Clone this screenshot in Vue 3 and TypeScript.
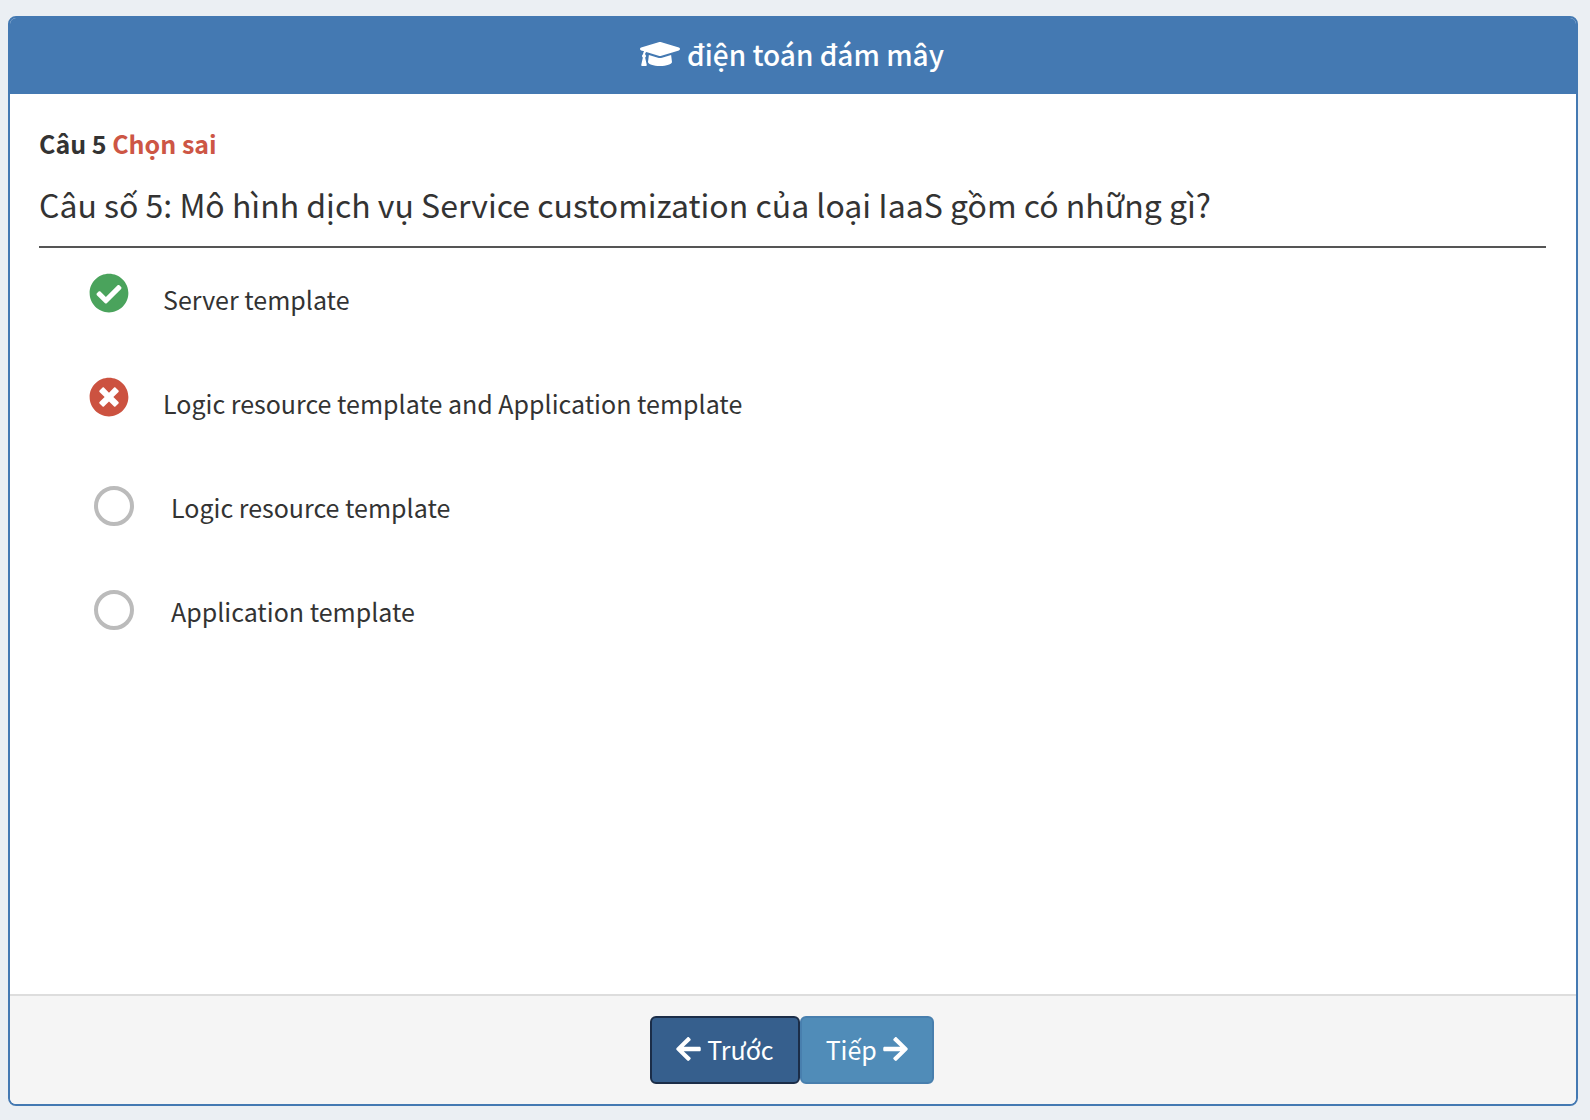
<script setup lang="ts">
import { ref } from 'vue'

type Mark = 'correct' | 'wrong' | 'none'

interface Option {
  id: number
  text: string
  mark: Mark
}

const title = 'điện toán đám mây'
const question = 'Câu số 5: Mô hình dịch vụ Service customization của loại IaaS gồm có những gì?'

const options: Option[] = [
  { id: 1, text: 'Server template', mark: 'correct' },
  { id: 2, text: 'Logic resource template and Application template', mark: 'wrong' },
  { id: 3, text: 'Logic resource template', mark: 'none' },
  { id: 4, text: 'Application template', mark: 'none' },
]

const picked = ref<number | null>(null)
</script>

<template>
  <main class="page">
    <section class="panel">
      <header class="panel-header">
        <svg class="cap-icon" viewBox="0 0 640 512" aria-hidden="true">
          <path
            d="M622.34 153.2L343.4 67.5c-15.2-4.67-31.6-4.67-46.79 0L17.66 153.2c-23.54 7.23-23.54 38.36 0 45.59l48.63 14.94c-10.67 13.19-17.23 29.28-17.88 46.9C38.78 266.15 32 276.11 32 288c0 10.78 5.68 19.85 13.86 25.65L20.33 428.53C18.11 438.52 25.71 448 35.94 448h56.11c10.24 0 17.84-9.48 15.62-19.47L82.14 313.65C90.32 307.85 96 298.78 96 288c0-11.57-6.47-21.25-15.66-26.87.76-15.02 8.44-28.3 20.69-36.72L296.6 284.5c9.06 2.78 26.44 6.25 46.79 0l278.95-85.7c23.55-7.24 23.55-38.36 0-45.6zM352.79 315.09c-28.53 8.76-52.84 3.92-65.59 0l-145.02-44.55L128 384c0 35.35 85.96 64 192 64s192-28.65 192-64l-14.18-113.47-145.03 44.56z"
          />
        </svg>
        <h1 class="title">{{ title }}</h1>
      </header>

      <div class="panel-body">
        <p class="status">Câu 5 <span class="status-wrong">Chọn sai</span></p>
        <h2 id="question" class="question">{{ question }}</h2>
        <ul class="options" aria-labelledby="question">
          <li v-for="option in options" :key="option.id" class="option">
            <template v-if="option.mark === 'none'">
              <input
                :id="`option-${option.id}`"
                v-model="picked"
                class="radio"
                type="radio"
                name="answer"
                :value="option.id"
              />
              <label class="option-text" :for="`option-${option.id}`">{{ option.text }}</label>
            </template>
            <template v-else>
              <svg class="mark" :class="option.mark" viewBox="0 0 512 512" aria-hidden="true">
                <path
                  v-if="option.mark === 'correct'"
                  d="M504 256c0 136.967-111.033 248-248 248S8 392.967 8 256 119.033 8 256 8s248 111.033 248 248zM227.314 387.314l184-184c6.248-6.248 6.248-16.379 0-22.627l-22.627-22.627c-6.248-6.249-16.379-6.249-22.628 0L216 308.118l-70.059-70.059c-6.248-6.248-16.379-6.248-22.628 0l-22.627 22.627c-6.248 6.248-6.248 16.379 0 22.627l104 104c6.249 6.249 16.379 6.249 22.628.001z"
                />
                <path
                  v-else
                  d="M256 8C119 8 8 119 8 256s111 248 248 248 248-111 248-248S393 8 256 8zm121.6 313.1c4.7 4.7 4.7 12.3 0 17L338 377.6c-4.7 4.7-12.3 4.7-17 0L256 312l-65.1 65.6c-4.7 4.7-12.3 4.7-17 0L134.4 338c-4.7-4.7-4.7-12.3 0-17l65.6-65-65.6-65.1c-4.7-4.7-4.7-12.3 0-17l39.6-39.6c4.7-4.7 12.3-4.7 17 0l65 65.7 65.1-65.6c4.7-4.7 12.3-4.7 17 0l39.6 39.6c4.7 4.7 4.7 12.3 0 17L312 256l65.6 65.1z"
                />
              </svg>
              <span class="option-text">{{ option.text }}</span>
            </template>
          </li>
        </ul>
      </div>

      <footer class="panel-footer">
        <button type="button" class="btn btn-prev">
          <svg class="arrow" viewBox="0 0 448 512" aria-hidden="true">
            <path
              d="M257.5 445.1l-22.2 22.2c-9.4 9.4-24.6 9.4-33.9 0L7 273c-9.4-9.4-9.4-24.6 0-33.9L201.4 44.7c9.4-9.4 24.6-9.4 33.9 0l22.2 22.2c9.5 9.5 9.3 25-.4 34.3L136.6 216H424c13.3 0 24 10.7 24 24v32c0 13.3-10.7 24-24 24H136.6l120.5 114.8c9.8 9.3 10 24.8.4 34.3z"
            />
          </svg>
          <span>Trước</span>
        </button>
        <button type="button" class="btn btn-next">
          <span>Tiếp</span>
          <svg class="arrow" viewBox="0 0 448 512" aria-hidden="true">
            <path
              d="M190.5 66.9l22.2-22.2c9.4-9.4 24.6-9.4 33.9 0L441 239c9.4 9.4 9.4 24.6 0 33.9L246.6 467.3c-9.4 9.4-24.6 9.4-33.9 0l-22.2-22.2c-9.5-9.5-9.3-25 .4-34.3L311.4 296H24c-13.3 0-24-10.7-24-24v-32c0-13.3 10.7-24 24-24h287.4L190.9 101.2c-9.8-9.3-10-24.8-.4-34.3z"
            />
          </svg>
        </button>
      </footer>
    </section>
  </main>
</template>

<style>
body {
  margin: 0;
  background: #ebeff3;
}
</style>

<style scoped>
.page {
  box-sizing: border-box;
  display: flex;
  min-height: 100vh;
  padding: 16px 12px 14px 8px;
  font-family: 'Source Sans Pro', 'Noto Sans CJK SC', 'Noto Sans', sans-serif;
  font-size: 25px;
  line-height: 32px;
  color: #333;
}

.panel {
  display: flex;
  flex: 1;
  flex-direction: column;
  overflow: hidden;
  border: 2px solid #4479b2;
  border-radius: 8px;
  background: #fff;
}

.panel-header {
  display: flex;
  align-items: center;
  justify-content: center;
  gap: 7px;
  padding: 16px 2px 20px 0;
  background: #4479b2;
  color: #fff;
}

.cap-icon {
  width: 40px;
  height: 32px;
  fill: currentColor;
}

.title {
  margin: 0;
  font-size: 28px;
  font-weight: 500;
  line-height: 40px;
}

.panel-body {
  flex: 1;
  padding: 33px 30px 33px 29px;
}

.status {
  margin: 0 0 25px;
  font-weight: 700;
}

.status-wrong {
  color: #cd5645;
}

.question {
  margin: 0;
  padding-bottom: 22px;
  border-bottom: 2px solid #555;
  font-size: 32px;
  font-weight: 400;
  line-height: 40px;
}

.options {
  margin: 0;
  padding: 0 0 0 50px;
  list-style: none;
}

.option {
  box-sizing: border-box;
  display: flex;
  align-items: center;
  min-height: 104px;
  padding-bottom: 2px;
}

.mark {
  width: 40px;
  height: 40px;
  margin: 0 34px 12px 0;
}

.correct {
  fill: #4aa35c;
}

.wrong {
  fill: #cc5240;
}

.radio {
  box-sizing: border-box;
  width: 40px;
  height: 40px;
  margin: 0 37px 2px 5px;
  border: 4px solid #bbb;
  border-radius: 50%;
  background: #fff;
  appearance: none;
}

.radio:checked {
  border-color: #4479b2;
}

.panel-footer {
  display: flex;
  justify-content: center;
  padding: 20px 2px 20px 0;
  border-top: 2px solid #ddd;
  background: #f5f5f5;
}

.btn {
  display: flex;
  align-items: center;
  gap: 6px;
  padding: 15px 24px 17px;
  border: 2px solid;
  border-radius: 6px;
  color: #fff;
  font: inherit;
  cursor: pointer;
}

.btn-prev {
  border-color: #1b2d48;
  background: #365f8d;
}

.btn-next {
  border-color: #487fae;
  background: #508cb8;
}

.arrow {
  width: 25px;
  height: 28px;
  fill: currentColor;
}
</style>
